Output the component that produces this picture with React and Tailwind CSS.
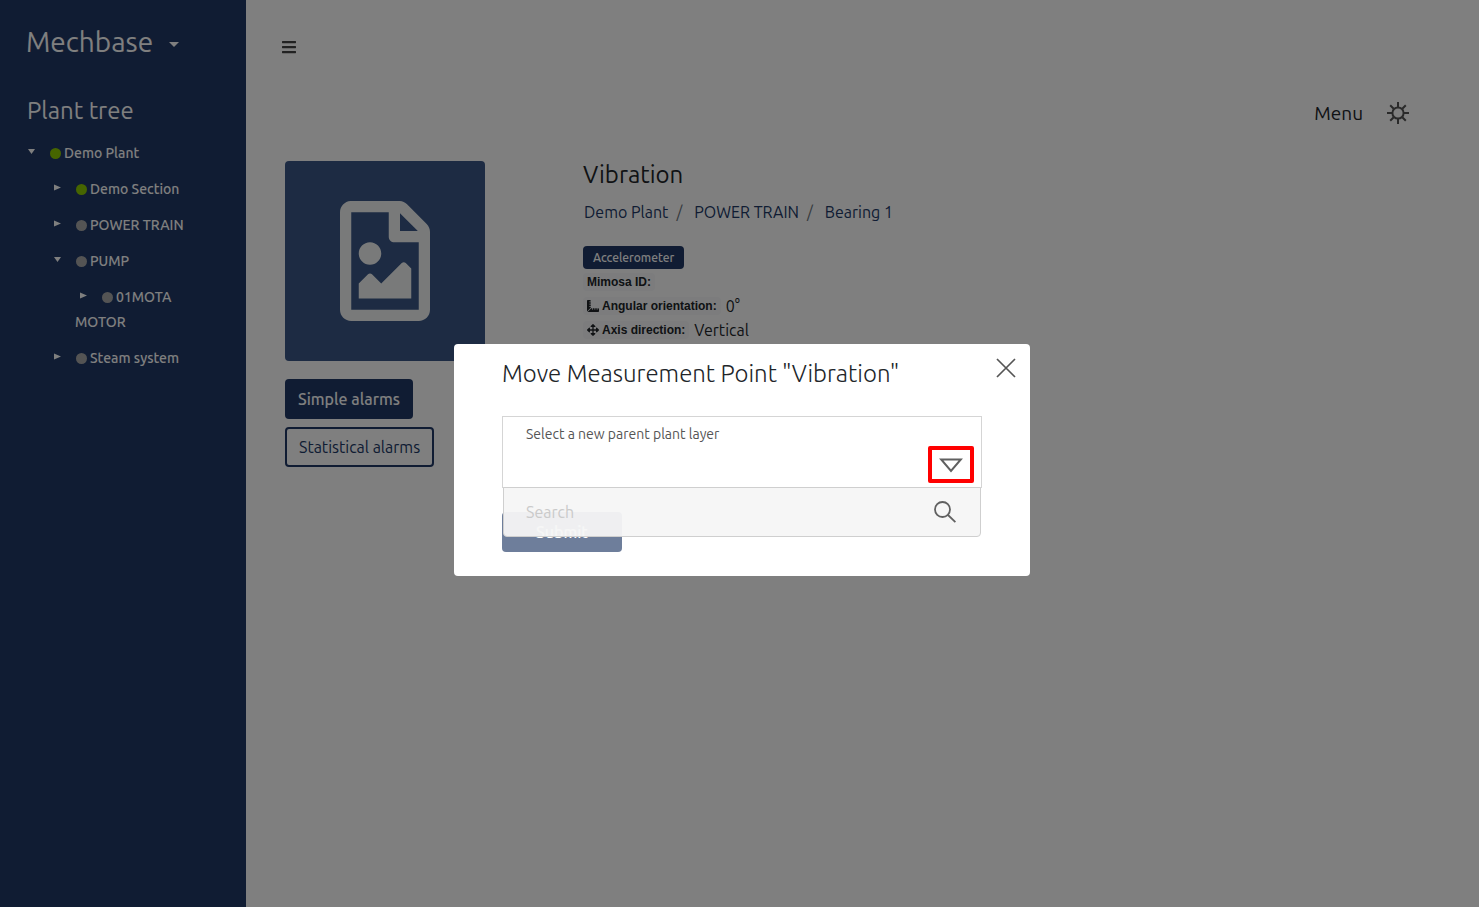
import React from "react";
import { FaArrowsAlt, FaBars, FaRegFileImage, FaRulerCombined } from "react-icons/fa";

const tree = {
  name: "Demo Plant",
  status: "ok",
  open: true,
  children: [
    { name: "Demo Section", status: "ok" },
    { name: "POWER TRAIN" },
    { name: "PUMP", open: true, children: [{ name: "01MOTA MOTOR" }] },
    { name: "Steam system" },
  ],
};

function TreeNode({ node }) {
  return (
    <li className="pl-[26px]">
      <div className="pb-[11px] text-sm leading-[25px] font-medium">
        <button
          type="button"
          aria-label={"Toggle " + node.name}
          aria-expanded={Boolean(node.open)}
          className="inline-block w-[27px] pb-[5px] pl-[5px] align-middle"
        >
          <svg viewBox="0 0 7 7" className="block size-[7px]" fill="currentColor">
            {node.open ? <path d="M0 1h7L3.5 6z" /> : <path d="M0 0.5v6l7-3z" />}
          </svg>
        </button>
        <span
          className={
            "mr-[3px] inline-block size-[11px] rounded-full align-[-1px] " +
            (node.status === "ok" ? "bg-[#8cca00]" : "bg-[#a9a9a9]")
          }
        />
        <a href="#">{node.name}</a>
      </div>
      {node.children && (
        <ul>
          {node.children.map((c) => (
            <TreeNode key={c.name} node={c} />
          ))}
        </ul>
      )}
    </li>
  );
}

function Sidebar() {
  return (
    <aside className="w-[246px] shrink-0 bg-[#203866] pr-8 text-white">
      <button type="button" className="flex items-center pt-6 pl-[26px] text-[28px] leading-9">
        Mechbase
        <svg viewBox="0 0 10 5" className="mt-1 ml-4 h-[5px] w-[10px]" fill="currentColor">
          <path d="M0 0h10L5 5z" />
        </svg>
      </button>
      <h2 className="pt-[33px] pl-[27px] text-2xl leading-9">Plant tree</h2>
      <ul className="-ml-[3px] pt-3">
        <TreeNode node={tree} />
      </ul>
    </aside>
  );
}

function Fact({ icon, label, value }) {
  return (
    <div className="flex h-6 items-center">
      <dt className="flex h-[18px] items-center gap-[3px] rounded bg-[#f8f9fa] px-1 font-['Liberation_Sans',sans-serif] text-xs font-bold text-[#212529]">
        {icon}
        {label}
      </dt>
      <dd className="pl-[5px] text-base text-[#212529]">{value}</dd>
    </div>
  );
}

function Details() {
  return (
    <main className="min-w-0 flex-1 bg-white">
      <button type="button" aria-label="Toggle sidebar" className="mt-[39px] ml-[35px] block text-base text-[#444]">
        <FaBars />
      </button>
      <div className="flex items-center justify-end gap-6 pt-[42px] pr-[70px]">
        <button type="button" className="text-[19px] leading-8 text-[#212529]">
          Menu
        </button>
        <button type="button" aria-label="Settings" className="text-[#555]">
          <svg viewBox="0 0 22 22" className="size-[22px]" fill="none" stroke="currentColor" strokeWidth="2">
            <circle cx="11" cy="11" r="5.6" />
            <path d="M11 0v5M11 17v5M0 11h5M17 11h5M3.2 3.2l3.5 3.5M15.3 15.3l3.5 3.5M18.8 3.2l-3.5 3.5M6.7 15.3l-3.5 3.5" />
          </svg>
        </button>
      </div>
      <div className="grid grid-cols-[298px_1fr] pt-8 pl-[39px]">
        <div className="flex flex-col items-start">
          <div className="flex size-[200px] items-center justify-center rounded bg-[#3a5786]">
            <FaRegFileImage className="h-[120px] w-[90px] text-[#f3f5f5]" />
          </div>
          <button type="button" className="mt-[18px] h-10 rounded bg-[#203866] px-[13px] text-base font-medium text-white">
            Simple alarms
          </button>
          <button type="button" className="mt-2 h-10 rounded border-2 border-[#203866] px-3 text-base text-[#203866]">
            Statistical alarms
          </button>
        </div>
        <div>
          <h1 className="text-2xl leading-7 text-[#212529]">Vibration</h1>
          <nav aria-label="Breadcrumb" className="flex gap-2 pt-[11px] pl-px text-base leading-6 text-[#203866]">
            <a href="#">Demo Plant</a>
            <span className="text-[#6c757d]">/</span>
            <a href="#" className="pl-1">POWER TRAIN</a>
            <span className="text-[#6c757d]">/</span>
            <a href="#" className="pl-1">Bearing 1</a>
          </nav>
          <span className="mt-[22px] mb-px inline-block rounded bg-[#203866] px-[10px] text-xs leading-[23px] font-medium text-white">
            Accelerometer
          </span>
          <dl>
            <Fact label="Mimosa ID:" />
            <Fact icon={<FaRulerCombined />} label="Angular orientation:" value="0°" />
            <Fact icon={<FaArrowsAlt />} label="Axis direction:" value="Vertical" />
          </dl>
        </div>
      </div>
    </main>
  );
}

function MoveDialog() {
  return (
    <div className="fixed inset-0 flex items-center justify-center bg-black/50 pt-[13px] pl-[5px]">
      <div
        role="dialog"
        aria-modal="true"
        aria-labelledby="move-title"
        className="relative w-full max-w-[576px] rounded bg-white px-12 pt-3 pb-6"
      >
        <button type="button" aria-label="Close" className="absolute top-[14px] right-[14px] text-[#555]">
          <svg viewBox="0 0 20 20" className="size-5" fill="none" stroke="currentColor" strokeWidth="1.7">
            <path d="M1 1l18 18M19 1L1 19" />
          </svg>
        </button>
        <h2 id="move-title" className="text-2xl leading-9 font-light text-[#212529]">
          Move Measurement Point "Vibration"
        </h2>
        <form className="pt-6" onSubmit={(e) => e.preventDefault()}>
          <div className="relative h-[72px] border border-[#d5d5d5] px-[23px] pt-2">
            <label htmlFor="layer-search" className="block text-sm leading-[18px] text-[#555]">
              Select a new parent plant layer
            </label>
            <button
              type="button"
              aria-label="Show plant layers"
              className="absolute right-[7px] bottom-1 flex h-[37px] w-[46px] items-center justify-center rounded-[2px] border-4 border-[#ff0000] text-[#606060]"
            >
              <svg viewBox="0 0 24 15" className="mt-[2px] h-[15px] w-6" fill="none" stroke="currentColor" strokeWidth="2">
                <path d="M2.2 1.5h19.6L12 13z" />
              </svg>
            </button>
            <div className="absolute inset-x-0 top-full z-10 flex h-[50px] items-center rounded-b border border-[#cfcfcf] bg-[#f6f6f6]/95 pr-6 pl-[22px]">
              <input
                id="layer-search"
                type="text"
                placeholder="Search"
                className="min-w-0 flex-1 bg-transparent text-base outline-none placeholder:text-[#cacaca]"
              />
              <svg viewBox="0 0 22 22" className="size-[22px]" fill="none" stroke="#606060" strokeWidth="1.8">
                <circle cx="8.5" cy="8.5" r="7.5" />
                <path d="M14 14l7.4 7.2" />
              </svg>
            </div>
          </div>
          <button type="submit" className="mt-6 block h-10 w-[120px] rounded bg-[#6e7e9b] text-base font-medium text-white">
            Submit
          </button>
        </form>
      </div>
    </div>
  );
}

export default function App() {
  return (
    <div className="flex min-h-screen font-['Ubuntu','Noto_Sans',sans-serif]">
      <Sidebar />
      <Details />
      <MoveDialog />
    </div>
  );
}
